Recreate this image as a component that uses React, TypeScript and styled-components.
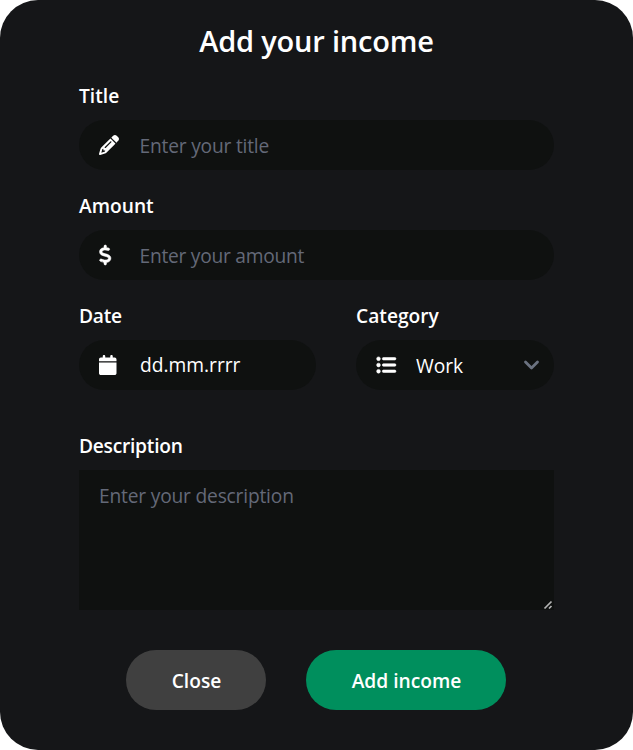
import React from "react";
import styled, { createGlobalStyle } from "styled-components";
import { FaPencil, FaDollarSign, FaCalendar, FaListUl } from "react-icons/fa6";

const GlobalStyle = createGlobalStyle`
  *, *::before, *::after { box-sizing: border-box; }
  body { margin: 0; background: #fff; }
  body, input, select, textarea, button {
    font-family: "Open Sans", "Noto Sans", sans-serif;
    font-size: 19.2px;
  }
`;

const Modal = styled.form`
  width: 633px;
  height: 750px;
  padding: 20px 79px 40px;
  border-radius: 38px;
  background: #151618;
  color: #fff;
  display: flex;
  flex-direction: column;
`;

const Heading = styled.h1`
  margin: 0 0 16px;
  height: 44px;
  line-height: 42px;
  font-size: 29px;
  font-weight: 600;
  text-align: center;
  letter-spacing: -0.2px;
`;

const Field = styled.div`
  display: flex;
  flex-direction: column;
  margin-bottom: 20px;
`;

const Label = styled.label<{ $spacing?: number }>`
  height: 30px;
  line-height: 30px;
  padding-top: 1px;
  margin-bottom: 10px;
  font-weight: 600;
  letter-spacing: ${(p) => p.$spacing ?? 0}px;
`;

const Control = styled.div`
  display: flex;
  align-items: center;
  height: 50px;
  padding: 0 12px 0 20px;
  border-radius: 25px;
  background: #0f1110;
`;

const IconSlot = styled.span<{ $heavy?: boolean }>`
  display: flex;
  flex: 0 0 40px;

  svg {
    width: 20px;
    height: 20px;
    overflow: visible;
    stroke-width: ${(p) => (p.$heavy ? 14 : 0)};
  }
`;

const TextInput = styled.input<{ $spacing?: number; $bright?: boolean }>`
  flex: 1;
  min-width: 0;
  height: 50px;
  padding: ${(p) => (p.$bright ? "0 0 2px 1px" : "0 0 0 0.5px")};
  border: 0;
  outline: 0;
  background: transparent;
  color: #fff;
  letter-spacing: ${(p) => p.$spacing ?? 0}px;

  &::placeholder {
    color: ${(p) => (p.$bright ? "#fff" : "#646978")};
    opacity: 1;
  }
`;

const Select = styled.select`
  flex: 1;
  min-width: 0;
  height: 50px;
  padding: 0;
  border: 0;
  outline: 0;
  appearance: none;
  background: transparent;
  color: #fff;
`;

const Split = styled.div`
  display: grid;
  grid-template-columns: 237px 198px;
  column-gap: 40px;
  margin-bottom: 20px;
`;

const TextAreaFrame = styled.div`
  position: relative;
  height: 140px;
`;

const TextArea = styled.textarea`
  display: block;
  width: 475px;
  height: 140px;
  padding: 11px 20px;
  border: 0;
  outline: 0;
  background: #0f1110;
  color: #fff;
  line-height: 30px;
  letter-spacing: -0.19px;
  resize: none;

  &::placeholder {
    color: #646978;
    opacity: 1;
  }
`;

const Grip = styled.svg`
  position: absolute;
  right: 1px;
  bottom: 0;
`;

const Actions = styled.div`
  display: flex;
  justify-content: center;
  gap: 40px;
  margin: 20px 1px 0 0;
`;

const Button = styled.button<{ $primary?: boolean }>`
  width: ${(p) => (p.$primary ? 200 : 140)}px;
  height: 60px;
  padding: 0 0 0 1px;
  border: 0;
  border-radius: 30px;
  background: ${(p) => (p.$primary ? "#008f5d" : "#404040")};
  color: #fff;
  font-weight: 600;
`;

const Chevron = () => (
  <svg width="20" height="20" viewBox="0 0 20 20" fill="none" stroke="#6b7280" strokeWidth="2.8" strokeLinecap="round" strokeLinejoin="round">
    <path d="M3.5 7l6 6 6-6" />
  </svg>
);

export default function App() {
  return (
    <>
      <GlobalStyle />
      <Modal onSubmit={(e) => e.preventDefault()}>
        <Heading>Add your income</Heading>
        <Field>
          <Label htmlFor="title">Title</Label>
          <Control>
            <IconSlot><FaPencil /></IconSlot>
            <TextInput id="title" placeholder="Enter your title" $spacing={-0.2} />
          </Control>
        </Field>
        <Field>
          <Label htmlFor="amount">Amount</Label>
          <Control>
            <IconSlot $heavy><FaDollarSign preserveAspectRatio="xMinYMid" /></IconSlot>
            <TextInput id="amount" placeholder="Enter your amount" $spacing={-0.25} />
          </Control>
        </Field>
        <Split>
          <Field>
            <Label htmlFor="date" $spacing={-0.25}>Date</Label>
            <Control>
              <IconSlot><FaCalendar preserveAspectRatio="xMinYMid" /></IconSlot>
              <TextInput id="date" placeholder="dd.mm.rrrr" $bright />
            </Control>
          </Field>
          <Field>
            <Label htmlFor="category">Category</Label>
            <Control>
              <IconSlot $heavy><FaListUl /></IconSlot>
              <Select id="category" defaultValue="Work">
                <option>Work</option>
              </Select>
              <Chevron />
            </Control>
          </Field>
        </Split>
        <Field>
          <Label htmlFor="description" $spacing={-0.25}>Description</Label>
          <TextAreaFrame>
            <TextArea id="description" placeholder="Enter your description" />
            <Grip width="10" height="10" viewBox="0 0 10 10" stroke="#b4b4b4" strokeWidth="1.7">
              <path d="M1.5 8.5l7-7M6 8.5l2.5-2.5" />
            </Grip>
          </TextAreaFrame>
        </Field>
        <Actions>
          <Button type="button">Close</Button>
          <Button type="submit" $primary>Add income</Button>
        </Actions>
      </Modal>
    </>
  );
}
